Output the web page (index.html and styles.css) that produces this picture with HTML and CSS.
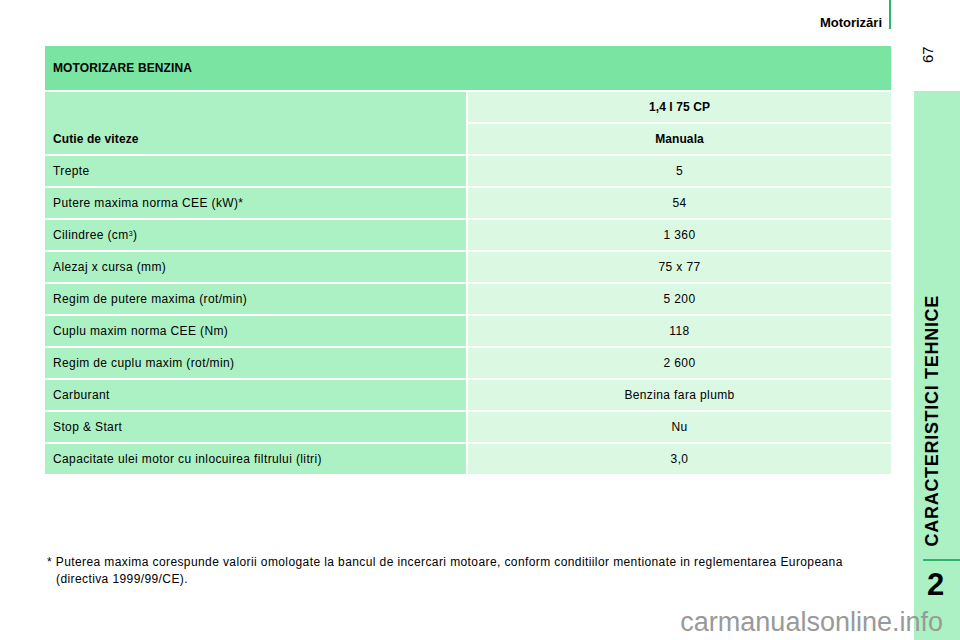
FILE: index.html
```html
<!DOCTYPE html>
<html lang="ro">
<head>
<meta charset="utf-8">
<title>Motorizări</title>
<link rel="stylesheet" href="styles.css">
</head>
<body>
<div class="page">
  <main class="main">
    <div class="topbar">
      <div class="running-title">Motorizări</div>
    </div>
    <div class="spec-table">
      <div class="cell head">MOTORIZARE BENZINA</div>
      <div class="cell label label-tall bold">Cutie de viteze</div>
      <div class="cell value bold">1,4 l 75 CP</div>
      <div class="cell value bold">Manuala</div>
      <div class="cell label">Trepte</div><div class="cell value">5</div>
      <div class="cell label">Putere maxima norma CEE (kW)*</div><div class="cell value">54</div>
      <div class="cell label">Cilindree (cm<sup>3</sup>)</div><div class="cell value">1 360</div>
      <div class="cell label">Alezaj x cursa (mm)</div><div class="cell value">75 x 77</div>
      <div class="cell label">Regim de putere maxima (rot/min)</div><div class="cell value">5 200</div>
      <div class="cell label">Cuplu maxim norma CEE (Nm)</div><div class="cell value">118</div>
      <div class="cell label">Regim de cuplu maxim (rot/min)</div><div class="cell value">2 600</div>
      <div class="cell label">Carburant</div><div class="cell value">Benzina fara plumb</div>
      <div class="cell label">Stop &amp; Start</div><div class="cell value">Nu</div>
      <div class="cell label">Capacitate ulei motor cu inlocuirea filtrului (litri)</div><div class="cell value">3,0</div>
    </div>
    <p class="footnote">* Puterea maxima corespunde valorii omologate la bancul de incercari motoare, conform conditiilor mentionate in reglementarea Europeana (directiva 1999/99/CE).</p>
  </main>
  <aside class="sidebar">
    <div class="page-top">
      <span class="page-num">67</span>
    </div>
    <div class="chapter-tab">
      <span class="chapter-title">CARACTERISTICI TEHNICE</span>
      <span class="chapter-rule"></span>
      <span class="chapter-num">2</span>
    </div>
  </aside>
  <div class="watermark">carmanualsonline.info</div>
</div>
</body>
</html>
```

FILE: styles.css
```css
* { box-sizing: border-box; }

html, body {
  margin: 0;
  padding: 0;
  background: #ffffff;
}

body {
  font-family: "Liberation Sans", Arial, sans-serif;
  color: #000000;
  width: 960px;
  height: 640px;
  overflow: hidden;
}

.page {
  position: relative;
  display: flex;
  width: 960px;
  height: 640px;
}

.main {
  flex: 1;
  display: flex;
  flex-direction: column;
  padding: 0 23px 0 45px;
}

.topbar {
  height: 46px;
  display: flex;
  justify-content: flex-end;
  align-items: flex-start;
}

.running-title {
  height: 29px;
  display: flex;
  align-items: flex-end;
  padding-right: 7px;
  padding-bottom: 0;
  border-right: 2px solid #2fb36c;
  font-size: 13px;
  line-height: 1;
  font-weight: bold;
  color: #000;
}

.spec-table {
  display: grid;
  grid-template-columns: 421px 423px;
  grid-template-rows: 44px;
  grid-auto-rows: 30px;
  gap: 2px;
}

.cell {
  display: flex;
  align-items: center;
  font-size: 12px;
  line-height: 14px;
  letter-spacing: 0.38px;
  color: #000;
}

.head {
  grid-column: 1 / -1;
  background: #7ae4a3;
  padding-left: 8px;
  font-weight: bold;
  letter-spacing: 0.1px;
}

.label {
  background: #acf1c4;
  padding-left: 8px;
}

.label-tall {
  grid-row: span 2;
  align-items: flex-end;
  padding-bottom: 8px;
}

.value {
  background: #daf8e2;
  justify-content: center;
}

.bold {
  font-weight: bold;
  letter-spacing: 0.1px;
}

.cell sup {
  font-size: 7px;
  line-height: 0;
  position: relative;
  top: -1px;
}

.footnote {
  margin: 80px 0 0 0;
  padding-left: 11px;
  text-indent: -9px;
  font-size: 12px;
  line-height: 17px;
  letter-spacing: 0.4px;
  color: #000;
}

.sidebar {
  width: 46px;
  display: flex;
  flex-direction: column;
}

.page-top {
  height: 91px;
  display: flex;
  justify-content: flex-start;
  padding: 45px 0 0 6px;
}

.page-num {
  writing-mode: vertical-rl;
  transform: rotate(180deg);
  font-size: 15px;
  line-height: 16px;
  height: 18px;
  color: #000;
}

.chapter-tab {
  flex: 1;
  background: #acf1c4;
  display: flex;
  flex-direction: column;
  justify-content: flex-end;
  align-items: flex-start;
  padding-bottom: 40px;
}

.chapter-title {
  writing-mode: vertical-rl;
  transform: rotate(180deg);
  font-size: 18px;
  line-height: 20px;
  font-weight: bold;
  letter-spacing: 0.7px;
  margin-left: 8px;
  margin-bottom: 13px;
  color: #000;
}

.chapter-rule {
  align-self: stretch;
  height: 2px;
  margin-left: 9px;
  background: #2fb36c;
}

.chapter-num {
  margin-top: 8px;
  margin-left: 13px;
  font-size: 31px;
  line-height: 31px;
  font-weight: bold;
  color: #000;
}

.watermark {
  position: absolute;
  right: 17px;
  bottom: 3px;
  font-size: 27px;
  line-height: 30px;
  color: #999999;
  z-index: 2;
}
```
